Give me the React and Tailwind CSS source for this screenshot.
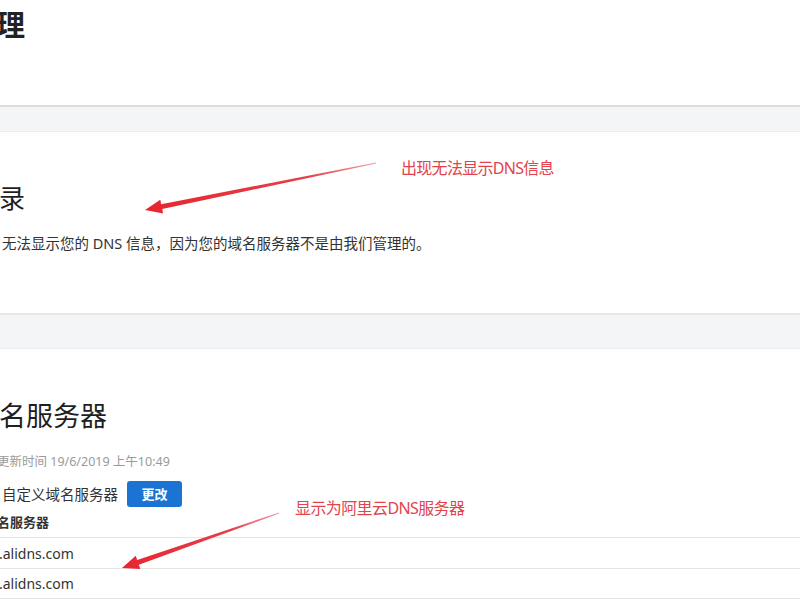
export default function App() {
  return (
    <div className="relative w-[800px] h-[600px] overflow-hidden bg-white font-['Noto_Sans','Noto_Sans_CJK_SC',sans-serif] text-[#222]">
      {/* top section */}
      <div className="h-[105px] pt-[6px]">
        <h1 className="text-[29px] font-bold leading-[38px] -ml-[4px]">理</h1>
      </div>
      <div className="h-[27px] bg-[#f4f5f7] border-t-2 border-t-[#dcdddf] border-b border-b-[#ebeced]" />

      {/* DNS records section */}
      <div className="h-[181px] pt-[48px]">
        <h2 className="text-[26px] leading-[36px] -ml-[1px] text-[#1f1f1f]">录</h2>
        <p className="mt-[17px] text-[14.5px] leading-[20px] text-[#333] ml-[2px]">
          无法显示您的 DNS 信息，因为您的域名服务器不是由我们管理的。
        </p>
      </div>
      <div className="h-[36px] bg-[#f4f5f7] border-t-2 border-t-[#e6e7e8] border-b border-b-[#ececed]" />

      {/* Name servers section */}
      <div className="pt-[49px]">
        <h2 className="text-[27px] leading-[36px] -ml-[1px] text-[#1f1f1f]">名服务器</h2>
        <div className="mt-[19px] text-[12.5px] leading-[18px] text-[#9a9a9a] -ml-[3px]">
          更新时间 19/6/2019 上午10:49
        </div>
        <div className="mt-[10px] flex items-center gap-[9px] ml-[2px]">
          <span className="text-[14.5px] leading-[20px] text-[#333]">自定义域名服务器</span>
          <button className="h-[26px] w-[55px] rounded-[3px] bg-[#1b74d3] text-white text-[13px] font-bold leading-none">
            更改
          </button>
        </div>
        <div className="mt-[6px] text-[13px] font-bold leading-[18px] text-[#333] -ml-[3px] pb-[6px] border-b border-[#e6e6e6]">
          名服务器
        </div>
        <div className="h-[31px] flex items-center border-b border-[#e6e6e6] text-[14px] text-[#333] -ml-[1px]">
          .alidns.com
        </div>
        <div className="h-[30px] flex items-center border-b border-[#e6e6e6] text-[14px] text-[#333] -ml-[1px]">
          .alidns.com
        </div>
      </div>

      {/* annotations */}
      <svg className="absolute left-0 top-0 pointer-events-none" width="800" height="600" viewBox="0 0 800 600">
        <defs>
          <linearGradient id="g1" x1="376" y1="163" x2="145" y2="210" gradientUnits="userSpaceOnUse">
            <stop offset="0" stopColor="#f1a0a8" />
            <stop offset="0.3" stopColor="#e5404a" />
            <stop offset="1" stopColor="#e8252f" />
          </linearGradient>
          <linearGradient id="g2" x1="279" y1="513" x2="122" y2="568" gradientUnits="userSpaceOnUse">
            <stop offset="0" stopColor="#f1a0a8" />
            <stop offset="0.3" stopColor="#e5404a" />
            <stop offset="1" stopColor="#e8252f" />
          </linearGradient>
        </defs>
        <polygon
          fill="url(#g1)"
          points="145,210 160.3,199.7 161.2,204.2 376,162.5 376.2,163.5 162.2,209.1 163.1,213.5"
        />
        <polygon
          fill="url(#g2)"
          points="122,568 135.7,555.8 137.2,560 279,512.5 279.3,513.5 138.8,564.8 140.3,569"
        />
      </svg>
      <div className="absolute left-[401px] top-[157px] text-[16px] leading-[22px] text-[#e2434c] tracking-[-0.7px]">
        出现无法显示DNS信息
      </div>
      <div className="absolute left-[295px] top-[497px] text-[16px] leading-[22px] text-[#e2434c] tracking-[-0.6px]">
        显示为阿里云DNS服务器
      </div>
    </div>
  );
}
